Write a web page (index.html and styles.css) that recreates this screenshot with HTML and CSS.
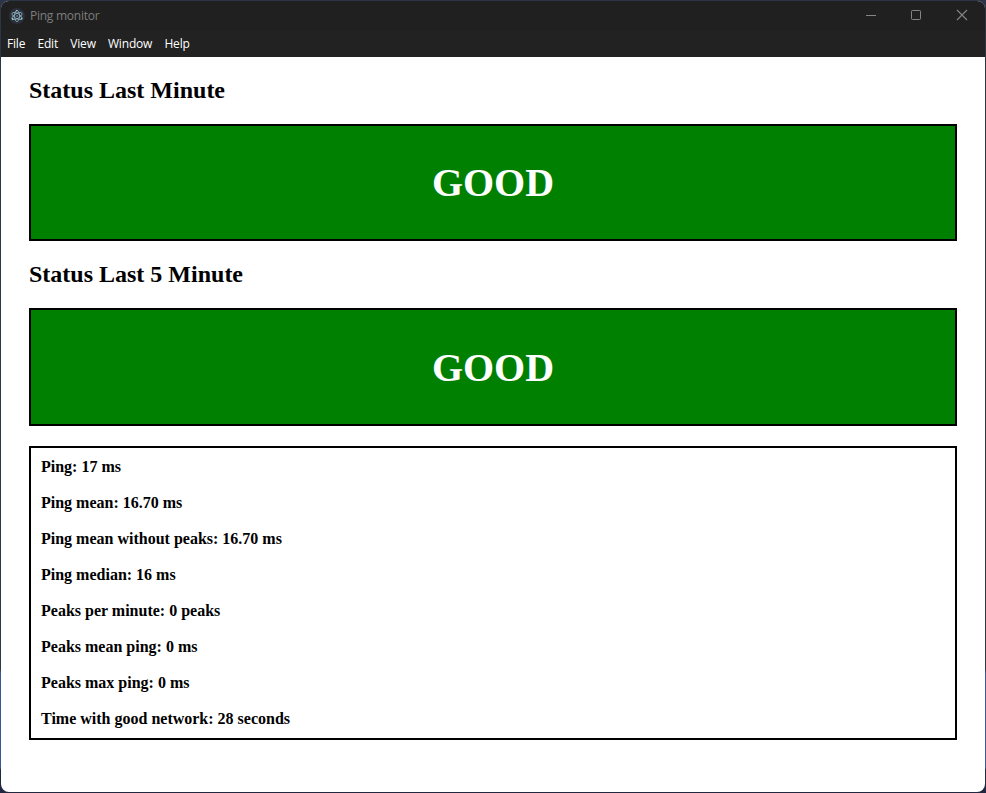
FILE: index.html
```html
<!DOCTYPE html>
<html lang="en">
<head>
<meta charset="utf-8">
<title>Ping monitor</title>
<link rel="stylesheet" href="styles.css">
</head>
<body>
<div class="window">
  <header class="titlebar">
    <svg class="app-icon" width="16" height="16" viewBox="0 0 16 16">
      <circle cx="8" cy="8" r="8" fill="#2b2e3b"/>
      <g fill="none" stroke="#8fb5be" stroke-width=".8">
        <ellipse cx="8" cy="8" rx="5.6" ry="2.5" transform="rotate(30 8 8)"/>
        <ellipse cx="8" cy="8" rx="5.6" ry="2.5" transform="rotate(90 8 8)"/>
        <ellipse cx="8" cy="8" rx="5.6" ry="2.5" transform="rotate(150 8 8)"/>
      </g>
      <g fill="#9fcbd3"><circle cx="8" cy="8" r=".7"/><circle cx="7.6" cy="2.8" r=".8"/><circle cx="12.6" cy="10.6" r=".9"/><circle cx="3.6" cy="11" r=".9"/></g>
    </svg>
    <span class="title">Ping monitor</span>
    <div class="controls">
      <svg width="46" height="30" viewBox="0 0 46 30"><path d="M19 14.5h10" stroke="#858585"/></svg>
      <svg width="46" height="30" viewBox="0 0 46 30"><rect x="18.5" y="9.5" width="9" height="9" rx=".8" fill="none" stroke="#858585"/></svg>
      <svg width="46" height="30" viewBox="0 0 46 30"><path d="M18 9l10 10M28 9L18 19" stroke="#858585" stroke-width="1.1"/></svg>
    </div>
  </header>
  <nav class="menu">
    <span>File</span><span>Edit</span><span>View</span><span>Window</span><span>Help</span>
  </nav>
  <main class="content">
    <h2>Status Last Minute</h2>
    <div class="status first">GOOD</div>
    <h2>Status Last 5 Minute</h2>
    <div class="status">GOOD</div>
    <div class="stats">
      <p>Ping: 17 ms</p>
      <p>Ping mean: 16.70 ms</p>
      <p>Ping mean without peaks: 16.70 ms</p>
      <p>Ping median: 16 ms</p>
      <p>Peaks per minute: 0 peaks</p>
      <p>Peaks mean ping: 0 ms</p>
      <p>Peaks max ping: 0 ms</p>
      <p>Time with good network: 28 seconds</p>
    </div>
  </main>
</div>
</body>
</html>
```
FILE: styles.css
```css
* { box-sizing: border-box; }
body {
  margin: 0;
  height: 793px;
  padding: 0 1px 1px;
  overflow: hidden;
  background: linear-gradient(#2c3547 0, #303846 669px, #3a579b 673px, #3a579b 768px, #20273e 770px);
}
.window {
  height: 792px;
  border-top: 1px solid #2c3547;
  border-radius: 8px;
  overflow: hidden;
  background: #fff;
}
.titlebar {
  display: flex;
  align-items: center;
  height: 30px;
  padding-left: 8px;
  background: #202020;
  color: #7d7d7d;
  font: 12px/30px "Open Sans", "Noto Sans", sans-serif;
}
.title { margin-left: 5px; letter-spacing: -.25px; }
.controls { display: flex; margin-left: auto; height: 30px; }
.controls svg { display: block; }
.menu {
  display: flex;
  gap: 12.2px;
  height: 26px;
  padding-left: 6px;
  background: #222;
  color: #fff;
  font: 12px/25px "Open Sans", "Noto Sans", sans-serif;
  letter-spacing: -.18px;
}
.content {
  padding: 19px 28px 0;
  color: #000;
  font-family: "Liberation Serif", serif;
  font-weight: bold;
}
h2 {
  margin: 0 0 20px;
  font-size: 24px;
  line-height: 28px;
}
.status {
  height: 118px;
  border: 2px solid #000;
  background: green;
  color: #fff;
  text-align: center;
  font-size: 40px;
  line-height: 115px;
}
.status.first { height: 117px; margin-bottom: 19px; line-height: 114px; }
.stats {
  height: 294px;
  margin-top: 20px;
  padding: 1px 10px;
  border: 2px solid #000;
  font-size: 16px;
}
.stats p { margin: 0; line-height: 36px; }
```
